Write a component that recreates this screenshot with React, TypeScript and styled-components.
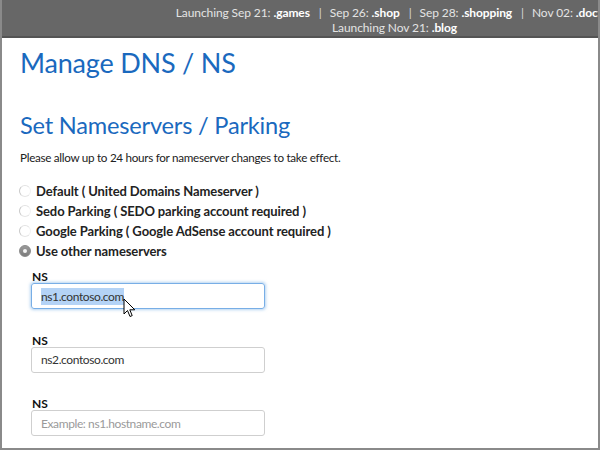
import styled, { createGlobalStyle } from "styled-components";

const GlobalStyle = createGlobalStyle`
  html, body {
    margin: 0;
    padding: 0;
    background: #fff;
    font-family: Lato, "Open Sans", sans-serif;
  }
`;

const Frame = styled.div`
  position: relative;
  width: 600px;
  height: 450px;
  box-sizing: border-box;
  border-left: 2px solid #8a8a8a;
  border-right: 2px solid #8a8a8a;
  border-bottom: 2px solid #8a8a8a;
  overflow: hidden;
  background: #fff;
`;

const TopBar = styled.div`
  height: 38px;
  margin: 0 -2px;
  box-sizing: border-box;
  background: #676767;
  border-bottom: 2px solid #545454;
  padding-top: 5px;
  overflow: hidden;
  white-space: nowrap;
  color: #e4e4e4;
  font-size: 12px;
  line-height: 15px;
  letter-spacing: -0.1px;
`;

/* the bar is centred on a page wider than the shot, so it overflows on the right */
const BarInner = styled.div`
  width: 789px;
  text-align: center;
`;

const Tld = styled.b`
  color: #fff;
  font-weight: 700;
`;

const Sep = styled.span`
  margin: 0 8px 0 9px;
  color: #d8d8d8;
`;

const Content = styled.main`
  padding: 0 0 0 18px;
  color: #222;
`;

const Title = styled.h1`
  margin: 8px 0 0;
  font-size: 27px;
  font-weight: 400;
  line-height: 34px;
  color: #1a69be;
  letter-spacing: -0.2px;
`;

const SubTitle = styled.h2`
  margin: 31px 0 0;
  font-size: 23.6px;
  font-weight: 400;
  line-height: 28px;
  color: #1a69be;
  letter-spacing: -0.2px;
`;

const Note = styled.p`
  margin: 10px 0 0;
  font-size: 11.7px;
  line-height: 16px;
  letter-spacing: -0.3px;
`;

const Options = styled.div`
  margin-top: 18px;
  display: flex;
  flex-direction: column;
  gap: 4px;
  margin-left: -1px;
`;

const Option = styled.label`
  display: flex;
  align-items: center;
  gap: 5px;
  height: 16px;
  font-size: 13px;
  font-weight: 700;
  letter-spacing: -0.1px;
`;

const Radio = styled.span<{ $checked?: boolean }>`
  width: 12px;
  height: 12px;
  border-radius: 50%;
  box-sizing: border-box;
  flex: none;
  display: flex;
  align-items: center;
  justify-content: center;
  border: 1px solid;
  border-color: ${(p) =>
    p.$checked ? "#8a8a8a" : "#e2e2e2 #f2f2f2 #e6e6e6 #c8c8c8"};
  background: ${(p) =>
    p.$checked ? "linear-gradient(#9a9a9a, #7c7c7c)" : "#fff"};

  &::after {
    content: "";
    display: ${(p) => (p.$checked ? "block" : "none")};
    width: 4px;
    height: 4px;
    border-radius: 50%;
    background: #f4f4f4;
  }
`;

const Fields = styled.div`
  margin-top: 12px;
  padding-left: 11px;
  display: flex;
  flex-direction: column;
  gap: 25.5px;
`;

const Field = styled.div`
  display: flex;
  flex-direction: column;
`;

const FieldLabel = styled.span`
  padding-left: 1px;
  font-size: 12px;
  font-weight: 700;
  line-height: 12px;
  color: #111;
`;

const Input = styled.div<{ $focused?: boolean; $placeholder?: boolean }>`
  width: 234px;
  height: 26px;
  box-sizing: border-box;
  border-radius: 3px;
  border: 1px solid ${(p) => (p.$focused ? "#78aee6" : "#cfcfcf")};
  box-shadow: ${(p) => (p.$focused ? "0 0 3px 1px rgba(120,174,230,0.55)" : "none")};
  padding-left: 9px;
  display: flex;
  align-items: center;
  font-size: 12px;
  color: ${(p) => (p.$placeholder ? "#9a9a9a" : "#333")};
  letter-spacing: -0.4px;
`;

const Selected = styled.span`
  background: #b4d3f6;
  padding: 1px 0;
`;

const Cursor = styled.svg`
  position: absolute;
  left: 121px;
  top: 298px;
`;

const items = [
  { date: "Launching Sep 21: ", tld: ".games" },
  { date: "Sep 26: ", tld: ".shop" },
  { date: "Sep 28: ", tld: ".shopping" },
  { date: "Nov 02: ", tld: ".doctor" },
];

export default function App() {
  return (
    <>
      <GlobalStyle />
      <Frame>
        <TopBar>
          <BarInner>
            <div>
              {items.map((it, i) => (
                <span key={it.tld}>
                  {i > 0 && <Sep>|</Sep>}
                  {it.date}
                  <Tld>{it.tld}</Tld>
                </span>
              ))}
            </div>
            <div>
              Launching Nov 21: <Tld>.blog</Tld>
            </div>
          </BarInner>
        </TopBar>
        <Content>
          <Title>Manage DNS / NS</Title>
          <SubTitle>Set Nameservers / Parking</SubTitle>
          <Note>Please allow up to 24 hours for nameserver changes to take effect.</Note>
          <Options>
            <Option>
              <Radio />
              Default ( United Domains Nameserver )
            </Option>
            <Option>
              <Radio />
              Sedo Parking ( SEDO parking account required )
            </Option>
            <Option>
              <Radio />
              Google Parking ( Google AdSense account required )
            </Option>
            <Option>
              <Radio $checked />
              Use other nameservers
            </Option>
          </Options>
          <Fields>
            <Field>
              <FieldLabel>NS</FieldLabel>
              <Input $focused>
                <Selected>ns1.contoso.com</Selected>
              </Input>
            </Field>
            <Field>
              <FieldLabel>NS</FieldLabel>
              <Input>ns2.contoso.com</Input>
            </Field>
            <Field>
              <FieldLabel>NS</FieldLabel>
              <Input $placeholder>Example: ns1.hostname.com</Input>
            </Field>
          </Fields>
        </Content>
        <Cursor width="14" height="21" viewBox="0 0 14 21">
          <path
            d="M1 1 L1 16 L4.5 12.5 L7 18.5 L9.2 17.6 L6.8 11.8 L11.8 11.8 Z"
            fill="#fff"
            stroke="#000"
            strokeWidth="1"
            strokeLinejoin="round"
          />
        </Cursor>
      </Frame>
    </>
  );
}
